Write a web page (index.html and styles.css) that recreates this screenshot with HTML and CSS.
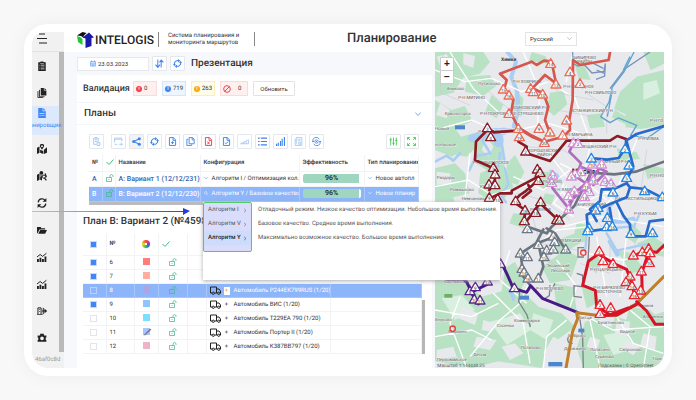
FILE: index.html
```html
<!DOCTYPE html>
<html lang="ru">
<head>
<meta charset="utf-8">
<title>Планирование</title>
<link rel="stylesheet" href="styles.css">
</head>
<body>
<svg class="sprite" aria-hidden="true">
  <symbol id="clipboard" viewBox="0 0 16 16"><path fill="currentColor" fill-rule="evenodd" d="M2 2h3V1h2l1-1 1 1h2v1h3v14H2zM4 6h1v1H4zm2 0h6v1H6zM4 9h1v1H4zm2 0h6v1H6zm-2 3h1v1H4zm2 0h6v1H6zM5 3h6v1H5z"/></symbol>
  <symbol id="copies" viewBox="0 0 16 16"><path fill="currentColor" d="M6 0h5v4h4v8H6z"/><path fill="currentColor" d="M12 0l3 3h-3z"/><path fill="none" stroke="currentColor" stroke-width="1.4" d="M4 3v11h8M1.500 5v10.300h8"/></symbol>
  <symbol id="filled-doc" viewBox="0 0 16 16"><path fill="currentColor" fill-rule="evenodd" d="M2 0h7v5h5v11H2zM4 8v1h8V8zm0 3v1h8v-1z"/><path fill="currentColor" d="M10 0l4 4h-4z"/></symbol>
  <symbol id="map-pin" viewBox="0 0 16 16"><path fill="currentColor" d="M0 6l4-2v10l-4 2zM5 9l5 2v5l-5-2zM11 9l5-4v9l-5 2z"/><path fill="currentColor" fill-rule="evenodd" d="M8 0c5 0 4 4 0 9C4 4 3 0 8 0zm0 2a1 1 0 100 3 1 1 0 000-3z"/></symbol>
  <symbol id="map-people" viewBox="0 0 16 16"><path fill="currentColor" d="M0 6l4-2v10l-4 2zM5 9l3 1v5l-3-1z"/><circle cx="7" cy="3" r="3" fill="currentColor"/><path fill="currentColor" d="M4 7h6l-3 3z"/><circle cx="11" cy="9" r="2.500" fill="none" stroke="currentColor" stroke-width="1.500"/><path fill="none" stroke="currentColor" stroke-width="2" d="M12 11l3 4M13 4l2 6"/></symbol>
  <symbol id="sync" viewBox="0 0 16 16"><path fill="none" stroke="currentColor" stroke-width="2" d="M2 7a6 6 0 0111-3M14 9a6 6 0 01-11 3"/><path fill="currentColor" d="M15 0v6H9zM1 16v-6h6z"/></symbol>
  <symbol id="folder" viewBox="0 0 16 16"><path fill="currentColor" d="M0 3h6l1 2h6v2H4l-3 6H0zM5 8h11l-3 6H2z"/></symbol>
  <symbol id="chart" viewBox="0 0 16 16"><path fill="currentColor" d="M0 11h3v5H0zm4-2h3v7H4zm4 2h3v5H8zm4-4h3v9h-3z"/><path fill="none" stroke="currentColor" stroke-width="1.600" d="M0 8l5-4 4 3 6-5"/></symbol>
  <symbol id="swap" viewBox="0 0 16 16"><path fill="currentColor" d="M0 13h9v1.500H0z"/><path fill="none" stroke="currentColor" stroke-width="1.600" d="M1.500 13V3h5v10M4 5v1M4 8v1M10 3v10M8 8h7"/><path fill="currentColor" d="M12 4l4 4-4 4z"/></symbol>
  <symbol id="camera" viewBox="0 0 16 16"><path fill="currentColor" fill-rule="evenodd" d="M1 4h4V1h6v3h4v3h-1v4h1v3H1v-3h1V7H1zm7 1.500a3 3 0 100 6 3 3 0 000-6z"/></symbol>
  <symbol id="calendar" viewBox="0 0 16 16"><path fill="none" stroke="currentColor" stroke-width="1.500" d="M1.500 3h13v12h-13zM1.500 7h13M4 0v4M12 0v4M4 10h8M4 12.500h8"/></symbol>
  <symbol id="arrows" viewBox="0 0 16 16"><path fill="none" stroke="currentColor" stroke-width="1.800" d="M5 1v13M1 10l4 5 4-5M11 15V2M8 6l3-4 4 4"/></symbol>
  <symbol id="rotate" viewBox="0 0 16 16"><path fill="none" stroke="currentColor" stroke-width="1.800" d="M2.500 10V6.500L6 3h4M13.500 6v3.500L10 13H6"/><path fill="currentColor" d="M0 9h5l-2.500 4zM11 7h5l-2.500-4zM9 0v6l4-3zM7 10v6l-4-3z"/></symbol>
  <symbol id="doc" viewBox="0 0 16 16"><path fill="none" stroke="currentColor" stroke-width="1.700" d="M2.500 1h7l4 4v10h-11zM9 1v5h4M5.500 10h5M8 7.500v5"/></symbol>
  <symbol id="doc-x" viewBox="0 0 16 16"><path fill="none" stroke="currentColor" stroke-width="1.700" d="M2.500 1h7l4 4v10h-11zM9 1v5h4M6 8l4 5M10 8l-4 5"/></symbol>
  <symbol id="doc-check" viewBox="0 0 16 16"><path fill="none" stroke="currentColor" stroke-width="1.700" d="M2.500 1h7l4 4v10h-11zM9 1v5h4M5 10l2 2 4-4"/></symbol>
  <symbol id="duplicate" viewBox="0 0 16 16"><path fill="none" stroke="currentColor" stroke-width="1.600" d="M5.500 1h6l3 3v8h-9zM11 1v4h3M4 4H1.500v11H10v-2"/></symbol>
  <symbol id="share" viewBox="0 0 16 16"><path fill="none" stroke="currentColor" stroke-width="1.800" d="M13 3L3 8l10 5"/><g fill="currentColor"><circle cx="13" cy="3" r="2.700"/><circle cx="3" cy="8" r="2.700"/><circle cx="13" cy="13" r="2.700"/></g></symbol>
  <symbol id="attach" viewBox="0 0 16 16"><path fill="none" stroke="currentColor" stroke-width="1.600" d="M3 2h8v7M3 2v11h5M5 1h4M5 5h4M5 8h4M9 10v5h5v-5z"/></symbol>
  <symbol id="window" viewBox="0 0 16 16"><path fill="none" stroke="currentColor" stroke-width="1.400" d="M1 10V2h13v6M1 4h13M9 13h6M12 10l3 3-3 2M1 13h5"/></symbol>
  <symbol id="ramp" viewBox="0 0 16 16"><path fill="none" stroke="currentColor" stroke-width="1.400" d="M1 12L15 5v7zM7 12V9M11 12V7"/></symbol>
  <symbol id="list" viewBox="0 0 16 16"><path stroke="currentColor" stroke-width="2" d="M0 2h3M5 2h11M0 8h3M5 8h11M0 14h3M5 14h11"/></symbol>
  <symbol id="bars" viewBox="0 0 16 16"><path fill="currentColor" d="M0 12h2v4H0zm3-2h2v6H3zm4-3h2v9H7zm3-4h2v13h-2zm4-3h2v16h-2z"/></symbol>
  <symbol id="report" viewBox="0 0 16 16"><path fill="none" stroke="currentColor" stroke-width="1.400" d="M4 1h10v14H2V4h2zM4 4v9M6 4h6M6 7h6M8 10h4v3H8z"/></symbol>
  <symbol id="gear" viewBox="0 0 16 16"><path fill="none" stroke="currentColor" stroke-width="1.500" d="M2 9a6 6 0 0111-5M14 7a6 6 0 01-11 5M0 8h3M13 8h3"/><circle cx="8" cy="8" r="3" fill="none" stroke="currentColor" stroke-width="1.500"/><circle cx="8" cy="8" r="1" fill="currentColor"/></symbol>
  <symbol id="tune" viewBox="0 0 16 16"><path fill="none" stroke="currentColor" stroke-width="1.600" d="M3 1v14M8 1v14M13 1v14M1 5h4M6 11h4M11 6h4"/></symbol>
  <symbol id="expand" viewBox="0 0 16 16"><path fill="none" stroke="currentColor" stroke-width="1.600" d="M1 5V1h4M1 1l4 4M11 1h4v4M15 1l-4 4M1 11v4h4M1 15l4-4M15 11v4h-4M15 15l-4-4"/></symbol>
  <symbol id="check" viewBox="0 0 16 16"><path fill="none" stroke="currentColor" stroke-width="2" d="M1 8l5 5 9-10"/></symbol>
  <symbol id="unlock" viewBox="0 0 16 16"><path fill="none" stroke="currentColor" stroke-width="1.500" d="M1 7h10v8H1zM8 7V3q3-4 6 0v3M6 10v2"/></symbol>
  <symbol id="down" viewBox="0 0 16 16"><path fill="none" stroke="currentColor" stroke-width="2" d="M1 4l7 8 7-8"/></symbol>
  <symbol id="right" viewBox="0 0 16 16"><path fill="none" stroke="currentColor" stroke-width="1.800" d="M4 1l8 7-8 7"/></symbol>
  <symbol id="search" viewBox="0 0 16 16"><path fill="none" stroke="currentColor" stroke-width="1.800" d="M11 11l4 4"/><circle cx="7" cy="7" r="5" fill="none" stroke="currentColor" stroke-width="1.800"/></symbol>
  <symbol id="ban" viewBox="0 0 16 16"><circle cx="8" cy="8" r="6.700" fill="none" stroke="currentColor" stroke-width="2"/><path stroke="currentColor" stroke-width="2" d="M13 3L3 13"/></symbol>
  <symbol id="truck" viewBox="0 0 22 18"><path fill="none" stroke="currentColor" stroke-width="2" stroke-linejoin="round" d="M4 14H1V2h12v12H9M13 6h5l3 4v4h-1M13 14h2"/><circle cx="6.500" cy="14.500" r="2.300" fill="none" stroke="currentColor" stroke-width="2"/><circle cx="17.500" cy="14.500" r="2.300" fill="none" stroke="currentColor" stroke-width="2"/></symbol>
</svg>

<div class="card">
<div class="app">
  <aside class="sidebar">
    <button class="burger" aria-label="Меню"><svg viewBox="0 0 12 12"><path d="M3 1h6M1 5.500h10M3 10h8" stroke="currentColor" stroke-width="1.200"/></svg></button>
    <nav class="nav">
      <a href="#"><svg><use href="#clipboard"/></svg></a>
      <a href="#"><svg><use href="#copies"/></svg></a>
      <a href="#" class="active"><svg><use href="#filled-doc"/></svg><span>планировщик</span></a>
      <a href="#"><svg><use href="#map-pin"/></svg></a>
      <a href="#"><svg><use href="#map-people"/></svg></a>
      <a href="#"><svg><use href="#sync"/></svg></a>
      <a href="#"><svg><use href="#folder"/></svg></a>
      <a href="#"><svg><use href="#chart"/></svg></a>
      <a href="#"><svg><use href="#chart"/></svg></a>
      <a href="#"><svg><use href="#swap"/></svg></a>
      <a href="#"><svg><use href="#camera"/></svg></a>
    </nav>
    <div class="build">46af0c8d</div>
  </aside>

  <div class="main">
    <header class="header">
      <div class="logo">
        <svg viewBox="0 0 34 32"><path fill="#111" d="M0 7L11 0l8 2-6 6 1 4-6-4z"/><path fill="#20c838" d="M0 8l8 3 3 4v11L2 20z"/><path fill="#1a1aa8" d="M11 11L24 1l10 10-5 1v16l-12 4V13z"/></svg>
        <span>INTELOGIS</span>
      </div>
      <p class="tagline">Система планирования и<br>мониторинга маршрутов</p>
      <h1>Планирование</h1>
      <select class="lang" aria-label="Язык"><option>Русский</option></select>
      <svg class="lang-arrow"><use href="#down"/></svg>
    </header>

    <div class="body">
      <div class="panels">
        <div class="daybar">
          <label class="date"><svg><use href="#calendar"/></svg><input type="text" value="23.03.2023" aria-label="Дата"></label>
          <button class="tool" aria-label="Сортировка"><svg><use href="#arrows"/></svg></button>
          <button class="tool" aria-label="Обновить день"><svg><use href="#rotate"/></svg></button>
          <h2>Презентация</h2>
        </div>

        <section class="validation">
          <h3>Валидация</h3>
          <span class="badge red"><i>×</i>0</span>
          <span class="badge blue"><i>!</i>719</span>
          <span class="badge yellow"><i>!</i>263</span>
          <span class="badge red wide"><svg><use href="#ban"/></svg>0</span>
          <button class="refresh">Обновить</button>
        </section>

        <section class="plans-title"><h3>Планы</h3><svg><use href="#down"/></svg></section>

        <section class="plans">
          <div class="toolbar">
            <button class="tool faded first" aria-label="Вложение"><svg><use href="#attach"/></svg></button>
            <button class="tool faded" aria-label="Окно"><svg><use href="#window"/></svg></button>
            <button class="tool pressed" aria-label="Поделиться"><svg><use href="#share"/></svg></button>
            <button class="tool" aria-label="Пересчитать"><svg><use href="#rotate"/></svg></button>
            <button class="tool" aria-label="Создать"><svg><use href="#doc"/></svg></button>
            <button class="tool" aria-label="Копировать"><svg><use href="#duplicate"/></svg></button>
            <button class="tool danger" aria-label="Удалить"><svg><use href="#doc-x"/></svg></button>
            <button class="tool" aria-label="Утвердить"><svg><use href="#doc-check"/></svg></button>
            <button class="tool faded" aria-label="Уклон"><svg><use href="#ramp"/></svg></button>
            <button class="tool" aria-label="Список"><svg><use href="#list"/></svg></button>
            <button class="tool" aria-label="Статистика"><svg><use href="#bars"/></svg></button>
            <button class="tool faded" aria-label="Отчёт"><svg><use href="#report"/></svg></button>
            <button class="tool" aria-label="Настройки"><svg><use href="#gear"/></svg></button>
            <button class="tool green push" aria-label="Фильтр"><svg><use href="#tune"/></svg></button>
            <button class="tool green" aria-label="Развернуть"><svg><use href="#expand"/></svg></button>
          </div>
          <table class="plan-table">
            <colgroup><col class="c-no"><col class="c-lock"><col class="c-name"><col class="c-conf"><col class="c-eff"><col class="c-type"></colgroup>
            <thead><tr><th>№</th><th><svg class="ok"><use href="#check"/></svg></th><th>Название</th><th>Конфигурация</th><th>Эффективность</th><th>Тип планирования</th></tr></thead>
            <tbody>
              <tr><td class="strong">А</td><td><svg class="ok"><use href="#unlock"/></svg></td><td class="strong">А: Вариант 1 (12/12/231)</td><td><svg class="mini"><use href="#down"/></svg>Алгоритм I / Оптимизация кол...</td><td><div class="meter">96%</div></td><td><svg class="mini"><use href="#down"/></svg>Новое автопл</td></tr>
              <tr class="selected"><td class="strong">В</td><td><svg class="ok"><use href="#unlock"/></svg></td><td class="strong">В: Вариант 2 (12/12/230)</td><td><svg class="mini"><use href="#search"/></svg>Алгоритм Y / Базовое качество...</td><td><div class="meter">96%</div></td><td><svg class="mini"><use href="#down"/></svg>Новое планир</td></tr>
            </tbody>
          </table>
          <div class="hscroll"></div>
        </section>

        <section class="plan">
          <h2>План В: Вариант 2 (№4598</h2>
          <div class="scroller">
          <table class="route-table">
            <colgroup><col class="r-check"><col class="r-no"><col class="r-color"><col class="r-lock"><col class="r-gap"><col class="r-car"><col></colgroup>
            <thead><tr><th><input type="checkbox" checked aria-label="Все"></th><th>№</th><th class="mid"><span class="wheel"></span></th><th><svg class="ok"><use href="#check"/></svg></th><th></th><th></th><th></th></tr></thead>
            <tbody>
              <tr><td><input type="checkbox" checked aria-label="6"></td><td>6</td><td class="mid"><span class="swatch coral"></span></td><td class="mid"><svg class="ok"><use href="#unlock"/></svg></td><td></td><td></td><td></td></tr>
              <tr><td><input type="checkbox" checked aria-label="7"></td><td>7</td><td class="mid"><span class="swatch peach"></span></td><td class="mid"><svg class="ok"><use href="#unlock"/></svg></td><td></td><td></td><td></td></tr>
              <tr class="selected"><td><input type="checkbox" aria-label="8"></td><td>8</td><td class="mid"><span class="swatch lilac"></span></td><td class="mid"><svg class="ok"><use href="#unlock"/></svg></td><td></td><td><svg class="truck"><use href="#truck"/></svg><b class="plus lit">+</b>Автомобиль Р244ЕК799RUS (1/20)</td><td></td></tr>
              <tr><td><input type="checkbox" checked aria-label="9"></td><td>9</td><td class="mid"><span class="swatch sky"></span></td><td class="mid"><svg class="ok"><use href="#unlock"/></svg></td><td></td><td><svg class="truck"><use href="#truck"/></svg><b class="plus">+</b>Автомобиль ВИС (1/20)</td><td></td></tr>
              <tr><td><input type="checkbox" aria-label="10"></td><td>10</td><td class="mid"><span class="swatch cyan"></span></td><td class="mid"><svg class="ok"><use href="#unlock"/></svg></td><td></td><td><svg class="truck"><use href="#truck"/></svg><b class="plus">+</b>Автомобиль Т229ЕА 790 (1/20)</td><td></td></tr>
              <tr><td><input type="checkbox" aria-label="11"></td><td>11</td><td class="mid"><span class="swatch edit"><svg viewBox="0 0 10 10"><path d="M0 9L8 1l2 1-8 7z" fill="#777"/></svg></span></td><td class="mid"><svg class="ok"><use href="#unlock"/></svg></td><td></td><td><svg class="truck"><use href="#truck"/></svg><b class="plus">+</b>Автомобиль Портер II (1/20)</td><td></td></tr>
              <tr><td><input type="checkbox" aria-label="12"></td><td>12</td><td class="mid"><span class="swatch pink"></span></td><td class="mid"><svg class="ok"><use href="#unlock"/></svg></td><td></td><td><svg class="truck"><use href="#truck"/></svg><b class="plus">+</b>Автомобиль К387ВВ797 (1/20)</td><td></td></tr>
            </tbody>
          </table>
          <div class="vscroll"></div>
          </div>
        </section>
      </div>

      <div class="map">
        <svg viewBox="15 96 687 948" preserveAspectRatio="xMidYMid slice">
          <rect x="15" y="96" width="687" height="948" fill="#e7e9ed"/>
          <!-- parks and woods -->
          <g fill="#b9e2c4">
            <path d="M15 96h145l20 30-30 35-50 12-30 45-55 12z"/>
            <path d="M15 240l50 30 40-12 22 45-50 25 30 42-40 40-52-20z"/>
            <path d="M70 96h60l12 24-30 40-42-15zM110 170l70-5 20 32-40 30-55-12z"/>
            <path d="M185 225l35 30-20 40-35-18zM255 210l25 25-6 55-24-8zM360 218l40-5 12 40-40 35-22-20zM305 96l40 12 14 24-62-10zM430 118l30 12 22 50-36-4zM470 285l45-5 10 40-45 5z"/>
            <path d="M570 215l50-45 82-20v140l-90 5-60-28zM585 285l117 0v30l-70 12-45-5zM555 270l50 30-20 12-40-20z"/>
            <path d="M640 96h62v35l-40 20z"/>
            <path d="M15 445l60-15 30 30 14 60-50 12 20 50-74 12zM60 360l70-20 20 30-40 40-50-8zM145 335l65 20 15 90-40 15-55-35zM150 460l70-30 30 70-45 60-60-40z"/>
            <path d="M15 560l100 30 45-30 18 60-60 50-103-22zM230 430l25-25 28 50-20 40-30-10zM320 455l50 0 5 26-30 28-28-20zM345 520l30 5-10 28-32-4zM250 580l40 5-10 40-42-15z"/>
            <path d="M560 385l60 12 10 20-60 5zM640 432l62 13v24l-50 8zM440 610l40 5-15 50-40 8zM395 655l40-15 15 30-60 35-30-10zM605 610l30 30-20 30-30-20z"/>
            <path d="M15 780l80-10 60 60 110-30 60 60 70 20 40 40-80 60-20 64-130-20-80 20-110-20z"/>
            <path d="M225 745l30-20 30 60-20 40-50-10zM335 740l70-50 40 20-25 70-60 10zM370 790l60 12 10 70-60-12zM470 740l30-40 25 10-25 50zM560 690l45 10 40 50-40 10zM620 670l50-20 32 20v40l-55-10z"/>
            <path d="M465 905l80-20 60 20 97-30v169H460l-20-60zM600 860l60 10 42 40-70 30-50-20zM455 800l35 5 20 40-40 20z"/>
          </g>
          <g fill="#d9efdf"><path d="M35 835l60-10 40 45-60 30zM180 905l80-20 50 40-80 50zM310 880l60 20-20 60-50-30zM520 945l60-10 40 50-70 20zM640 190l40-10 10 40-50 20z"/></g>
          <g fill="#e7e9ed"><path d="M95 860l50 20-10 35-50-20zM140 950l60 10-20 30-50-10zM370 950l40 20-20 50-50-20zM515 880l40 10-10 30-42-10zM590 960l40 20-20 26-32-20zM20 110l30-8 20 40-30 20zM100 100l35 8-5 35-30-10zM30 250l30 20-10 25-32-10zM20 455l40 5 5 30-45 5zM160 900l35 10-10 25-30-5zM235 890l35-10 20 30-40 15zM215 980l40-10 25 30-40 20zM20 990l50-10 10 30-60 10zM560 900l40 5-5 45-40-10zM640 940l40 10-5 40-45-10zM480 950l30 10-10 30-30-10zM170 350l20 30-15 30-20-20zM180 460l25 5-5 40-30-10z"/></g>
          <!-- water -->
          <g fill="none" stroke="#a9cdf3" stroke-linecap="round" stroke-linejoin="round">
            <path stroke-width="12" d="M232 96l26 30-14 45 18 45 3 55-14 48"/>
            <path stroke-width="8" d="M244 330l-60-2-28 32 25 40-42 8-22 44M180 350l35 20 8 50M15 425l35-18 20 15 20-22M210 400l-4 36-26 20"/>
            <path stroke-width="22" d="M190 340l30-6M125 355l20-8"/>
            <path stroke-width="7" d="M225 445l10 48-22 32 15 22M362 452l20 12 12 26M475 600l-10 95M562 540l-30 28 18 56 62-5 18-40M530 640l30 52 90-20"/>
            <path stroke-width="14" d="M534 595q24 18 76 2M540 665l22 38"/>
          </g>
          <g fill="#a9cdf3"><ellipse cx="205" cy="360" rx="16" ry="22"/><path d="M232 800l14 5 10 30-8 10z"/></g>
          <!-- streets -->
          <g fill="none" stroke="#fff" stroke-width="4">
            <path d="M15 150l90 35 80-10 90 40 80-30 80 50M60 96l70 110 85 80M15 330l110-30 90 40 140-30 100 30M280 96l50 120-10 130M430 96l-22 90M430 220l60 170M15 500l100-20 70 45 110-30M120 400l-20 180M250 470l90 40 80-60M340 380l70 90M390 430l120 60 60 80M420 480q50-60 100-20t20 80-90 20-50-70M400 620l120-30 180 30M480 380l-30 140M620 360l-60 150 10 90M300 690l80-60 100-10M240 690l-30 90 80 70M300 780l-30 70-60 50-90 110M190 820l90 90 20 120M15 870l110 20 80-40M15 950l110-20 60 30M90 830l-30 80 50 134M450 880l100 50 150-10M480 900l30 144M560 890l50 80 90 30M600 870l60 50-20 124M470 700l110 20 120-30M500 650l30 180M590 640l-20 190M380 720l60 80-20 60M410 900l-60 50-10 94M460 480l70 60M450 550l100-40M430 590l-60-40 40-50"/>
          </g>
          <g fill="none" stroke="#c9ccd3" stroke-width="2"><path d="M40 96l-10 120 90 40M170 210l70 60 90 0M330 160l60 60 100 20M470 220l60 40 0 80M380 270l110 20M290 380l110 10 60 40M260 520l80 20 80 60M500 460l80 0 50 50M300 560l30 110 110 20M650 390l-20 140M490 590l50 60 0 100M615 600l0 90M350 700l40 60M450 730l90 30"/></g>
          <!-- secondary tracks -->
          <g fill="none" stroke-width="4">
            <path stroke="#7793bd" d="M428 96l2 35 15 8 13-10 28 30 36-5 4-24M526 132l-2 36-26 10M500 150l22 10M460 115l60 30M660 96l-75 50-45 60"/>
            <path stroke="#5fa4cf" d="M612 96l-30 60-35 45-10 45-25 44 28 18 25-14 55 22-18 30 50 8 50-35M600 110l-20 40M547 210l-15 80"/>
            <path stroke="#7c838b" d="M270 805l-4 40 25 40 10 36M360 795l-2 32-15 10M375 790l-12 24M440 760l18 6v34l-26-3v32l24 3M448 885l10 70 2 89M420 946q-14 12 0 25l8-1M478 650l-4 70M462 683h-18v28h18"/>
          </g>
          <!-- place names -->
          <g class="places">
            <text x="213" y="124" class="town">Химки</text><text x="430" y="118">БИБИРЕВО</text><text x="442" y="130">РАЙОН</text>
            <text x="248" y="189">Р-Н ХОВРИНО</text><text x="400" y="205">Р-Н ОТРАДНОЕ</text><text x="465" y="221">Р-Н СВИБЛОВО</text>
            <text x="85" y="236">Р-Н МИТИНО</text><text x="145" y="195">Путилково</text><text x="50" y="209">Аниково</text><text x="44" y="285">Красногорск</text>
            <text x="150" y="284">Р-Н ПОКРОВСКОЕ-СТРЕШНЕВО</text><text x="245" y="268">ВОЙКОВСКИЙ Р-Н</text><text x="420" y="276">ОСТАНКИНСКИЙ Р-Н</text>
            <text x="145" y="340">Р-Н СТРОГИНО</text><text x="400" y="349">Р-Н МАРЬИНА</text><text x="660" y="306">Р-Н ГО</text><text x="625" y="360">Р-Н ИЗМА</text>
            <text x="294" y="395">ХОРОШЕВСКИЙ</text><text x="322" y="408">РАЙОН</text><text x="450" y="385">МЕЩАНСКИЙ Р-Н</text>
            <text x="128" y="433">Р-Н КРЫЛАТСКОЕ</text><text x="500" y="430">ТАГАННЫЙ Р-Н</text><text x="425" y="461" class="city">Москва</text>
            <text x="15" y="377">нгельское</text><text x="15" y="330">Новый</text><text x="20" y="477">Раздоры</text><text x="60" y="512">Ромашково</text><text x="660" y="470">Р-Н НО</text>
            <text x="330" y="490">АРБАТОВО</text><text x="150" y="505">КУНЦЕВО</text><text x="95" y="541">Немчиновка</text><text x="370" y="513">Р-Н ХАМОВНИКИ</text>
            <text x="555" y="540">Р-Н ТЕКСТИЛЬЩИКИ</text><text x="430" y="557">ДАНИЛОВСКИЙ</text><text x="300" y="573">РАМЕНКИ</text><text x="612" y="585">Р-Н КУЗЬМ</text>
            <text x="372" y="665">ЧЕРЁМУШКИ</text><text x="350" y="742">Зюзинский</text><text x="362" y="755">Лесопарк</text><text x="480" y="754">Р-Н ЦАРИЦЫНО</text><text x="490" y="807">Р-Н БИРЮЛЁВО</text><text x="500" y="820">ВОСТОЧНОЕ</text>
            <text x="318" y="810">Р-Н ЯСЕНЕВО</text><text x="42" y="790">Картмазово</text><text x="15" y="904">Внуково</text><text x="55" y="938">Марьино</text><text x="200" y="921">Сосенки</text><text x="252" y="905">Коммунарка</text><text x="272" y="986">Потапово</text>
            <text x="130" y="1007">Десна</text><text x="20" y="1022">Первомайское</text><text x="448" y="896">Битца</text><text x="503" y="911">Булатниково</text><text x="415" y="951">Боброво</text><text x="402" y="991">Дрожжино</text>
            <text x="480" y="992">Лопатино</text><text x="495" y="1015">Суханово</text><text x="570" y="938">Видное</text><text x="568" y="992">Сапроново</text><text x="638" y="893">Апаринки</text><text x="600" y="860">им. Ленина</text><text x="668" y="1020">Горки</text>
          </g>
          <g fill="#4b86cf"><rect x="75" y="316" width="30" height="12"/><rect x="267" y="827" width="30" height="12"/><rect x="445" y="926" width="18" height="11"/><rect x="355" y="1026" width="42" height="13"/><rect x="43" y="822" width="24" height="11" fill="#70ad65"/></g>
          <!-- delivery routes -->
          <g fill="none" stroke-width="8" stroke-linejoin="round" stroke-linecap="round">
            <path stroke="#6c757f" d="M702 425l-85 30-64 8-70-5-50 100-68 62-15 20-57-20M350 625l25 15 32 50M340 628l-22 42-46 30 8 70 20 25M325 670l15 70-15 40M372 650l-50 20"/>
            <path stroke="#d5574e" d="M210 161l95-36 15 10 22-13 23 3 13 65-33-25-38 40 33 15 15 40-10 40 13 35M210 161l20 19-8 30 28 30-7 40 22 42 35 22 43 21 57-15 20-20-2-30 10-60 1-120 22 15 85-15 10-58 45 5 28 23 45-50M265 325l40 25 38 15"/>
            <path stroke="#8b1a25" d="M172 322l20 15 70-5M172 330l-34 35-3 55 55 25 5 35-17 30M180 535l30-15h35v-8l75-40 3-25M265 365l25 15v20l70 23 50-61 130 0 22-14 28 10M325 480l-40 35-15 10-20 20 35 25-2 42 47-62 60 55M295 495l8 18-25 20"/>
            <path stroke="#ad6fbd" d="M430 370l-12 25 35 35-15 40 30 20-30 25-22 50-48-60-8-30M485 435l45 20-40 40M418 545l60-50 35-60M450 440l35 12-20 70"/>
            <path stroke="#2869c9" d="M702 318l-82 24-32 20 0 20-22 32-35 5-50-5M590 365l20 75-18 35-2 15-40 18-35 0-5 35-30 25 20 35M590 490l10 12 45 5 50 25M600 502l-10 30-50 20-70 32 4 50 75-10-10-60M560 547l20 40 20 27 2 35 45 0 12-45 43-5"/>
            <path stroke="#481a86" stroke-width="9" d="M210 720l20 40 20 45 40 12 12-20 35 38 105 42M50 778h50l10 8 15 30 45-22M125 820l20 32"/>
            <path stroke="#be8129" stroke-width="9" d="M408 1044l20-110 15-38-3-18 60 8 60 0 60-35 82-82"/>
            <path stroke="#d51427" stroke-width="9" d="M550 730l-45-28-30 22-17 72 38 15 4 48 40 25 55-20M500 887l60-2 60-32M550 730l40 18 18 45 5 35M610 710l30-18 40 5 22-21M655 700l-20 60 2 60M620 845l30 28 26 40h26"/>
          </g>
          <g fill="none" stroke="#ed3d39" stroke-width="4"><circle cx="460" cy="698" r="8"/><circle cx="68" cy="926" r="8"/></g>
          <g id="markers" class="markers"></g>
          <text x="22" y="1042" class="credit">Масштаб 1:144448.25</text><text x="505" y="1042" class="credit">Подсказки | © OpenStreet</text>
        </svg>
        <div class="zoom"><button aria-label="Приблизить">+</button><button aria-label="Отдалить">−</button></div>
      </div>
    </div>
  </div>

  <div class="popup">
    <ul class="algos"><li>Алгоритм I<svg><use href="#right"/></svg></li><li>Алгоритм V<svg><use href="#right"/></svg></li><li class="current">Алгоритм Y<svg><use href="#right"/></svg></li></ul>
    <ul class="notes"><li>Отладочный режим. Низкое качество оптимизации. Небольшое время выполнения.</li><li>Базовое качество. Среднее время выполнения.</li><li>Максимально возможное качество. Большое время выполнения.</li></ul>
  </div>
  <div class="pointer"></div>
</div>
</div>
<script src="markers.js"></script>
</body>
</html>
```
FILE: styles.css
```css
* { box-sizing: border-box; }
body { margin: 0; min-height: 100vh; padding: 24px; display: flex; background: #f8f8f8; color: #333; font: 6px/8px Roboto, "Noto Sans", sans-serif; text-rendering: geometricPrecision; }
h1, h2, h3, p, ul { margin: 0; padding: 0; }
ul { list-style: none; }
button, input, select { font: inherit; color: inherit; margin: 0; padding: 0; }
svg { display: block; flex: none; }
.sprite { position: absolute; width: 0; height: 0; }

.card { flex: 1; min-width: 0; display: flex; padding: 8px; background: #fff; border-radius: 24px; box-shadow: 0 0 16px #ececec; }
.app { position: relative; flex: 1; min-width: 0; display: flex; }

.sidebar { width: 32px; flex: none; display: flex; flex-direction: column; background: #f1f1f1; border-radius: 12px 0 0 16px; overflow: hidden; color: #222; }
.burger { height: 20px; border: 0; border-bottom: 1px solid #e2e2e2; background: none; padding: 0 0 6px 4px; text-align: left; }
.burger svg { width: 12px; height: 12px; }
.nav { flex: 1; display: flex; flex-direction: column; border-right: 5px solid #b9b9b9; }
.nav a { flex: 1; display: flex; flex-direction: column; align-items: center; justify-content: center; color: inherit; text-decoration: none; padding-right: 7px; }
.nav svg { width: 10px; height: 10px; }
.nav .active { background: #dce9fd; color: #4087f5; justify-content: flex-start; padding-top: 2px; gap: 4px; }
.build { height: 16px; padding: 4px 0 0 3px; color: #999; }

.main { flex: 1; min-width: 0; display: flex; flex-direction: column; }
.header { height: 20px; display: flex; align-items: flex-start; padding-left: 13px; }
.logo { display: flex; width: 82px; height: 15px; border-right: 1px solid #888; color: #222; }
.logo svg { width: 17px; height: 16px; }
.logo span { margin-left: 1px; font-size: 12px; line-height: 16px; font-weight: 500; }
.tagline { width: 96px; height: 14px; padding-left: 9px; line-height: 7px; border-right: 1px solid #888; }
.header h1 { margin-left: 92px; font-size: 13px; line-height: 14px; font-weight: 500; white-space: nowrap; }
.lang { width: 52px; height: 14px; margin-left: auto; padding-left: 4px; appearance: none; background: #fff; border: 1px solid #e4e4e4; }
.lang-arrow { width: 5px; height: 5px; margin: 4px 92px 0 -10px; color: #aaa; }

.body { flex: 1; min-height: 0; display: grid; grid-template-columns: minmax(0, 371fr) minmax(0, 229fr); }
.panels { min-width: 0; display: flex; flex-direction: column; background: #f7f8fb; padding: 0 3px 0 13px; }
.panels section { background: #fff; }
.daybar { height: 23px; display: flex; align-items: center; gap: 3px; }
.date { width: 72px; height: 14px; display: flex; align-items: center; gap: 2px; padding-left: 12px; background: #fff; border: 1px solid #e6e8ec; }
.date svg { width: 6px; height: 7px; color: #4087f5; }
.date input { width: 46px; border: 0; outline: 0; background: none; }
.daybar h2 { margin-left: 3px; font-size: 10px; line-height: 14px; font-weight: 500; }
.tool { width: 15px; height: 15px; flex: none; display: grid; place-items: center; background: #fff; border: 1px solid #e4e7ec; border-radius: 1px; color: #3f84ee; }
.tool svg { width: 9px; height: 9px; }
.faded { color: #a0c3f4; }
.pressed { background: #f1f2f4; }
.danger { color: #f0414c; }
.green { color: #42c84f; }

.validation { height: 28px; display: flex; align-items: center; gap: 5px; padding-left: 6px; border-bottom: 1px solid #f5f6f9; }
.validation h3 { width: 45px; font-size: 9px; line-height: 14px; font-weight: 500; }
.badge { width: 24px; height: 15px; display: flex; align-items: center; gap: 2px; padding-left: 2px; border: 1px solid; }
.badge i { width: 6px; height: 6px; border-radius: 50%; color: #fff; font: bold 5px/6px Roboto, sans-serif; text-align: center; }
.badge svg { width: 8px; height: 8px; color: #e24a50; }
.red { background: #fff0f0; border-color: #fadada; }
.red i { background: #f43e46; }
.blue { background: #edf6ff; border-color: #d4e6fb; }
.blue i { background: #3d84ee; }
.yellow { background: #fffce8; border-color: #f8efbd; }
.yellow i { background: #f9a908; }
.wide { width: 28px; gap: 7px; }
.refresh { width: 42px; height: 15px; background: #fff; border: 1px solid #e1e3e6; border-radius: 1px; }
.plans-title { height: 22px; display: flex; align-items: center; justify-content: space-between; padding: 0 11px 0 7px; border-bottom: 1px solid #f5f6f9; }
.plans-title h3 { font-size: 10px; line-height: 14px; font-weight: 500; }
.plans-title svg { width: 6px; height: 6px; color: #4f91ef; }

.plans { padding: 9px 13px 0 12px; }
.toolbar { display: flex; gap: 3px; height: 21px; }
.first { margin-right: 4px; }
.push { margin-left: auto; }
table { width: 100%; table-layout: fixed; border-collapse: collapse; }
th, td { padding: 0 0 0 3px; text-align: left; white-space: nowrap; overflow: hidden; font-weight: 400; border-right: 1px solid #f2f3f5; border-bottom: 1px solid #f2f3f5; }
th { font-weight: 500; }
td svg, th svg { display: inline-block; vertical-align: middle; }
.ok { width: 8px; height: 8px; color: #42ba86; }
.mini { width: 4px; height: 4px; margin-right: 4px; color: #629aee; }
.plan-table th { height: 16px; }
.plan-table td { height: 15px; }
.plan-table .strong { font-size: 7px; font-weight: 500; color: #3560ad; }
.c-no { width: 13px; }
.c-lock { width: 13px; }
.c-name { width: 85px; }
.c-conf { width: 99px; }
.c-eff { width: 65px; }
.meter { width: 58px; height: 9px; border-radius: 2px; background: linear-gradient(90deg, #9fd6bf 96%, #fff 96%); color: #222; font-size: 7px; font-weight: 500; text-align: center; line-height: 9px; }
.selected td { background: #8db5fa; color: #fff; border-color: #a8c7fb; }
.plan-table .selected .strong, .selected .mini { color: #fff; }
.hscroll { height: 3px; background: #bbb; }

.plan { flex: 1; padding: 9px 7px 0 6px; }
.plan h2 { height: 20px; font-size: 10px; line-height: 15px; font-weight: 500; white-space: nowrap; }
.scroller { display: flex; align-items: flex-end; }
.route-table { flex: 1; width: auto; min-width: 0; }
.route-table th { height: 22px; }
.route-table td { height: 14px; }
.route-table tr > :first-child { padding-left: 7px; }
.route-table .mid { text-align: center; padding: 0; }
.vscroll { width: 3px; height: 54px; background: #b6b6b6; }
.r-check { width: 23px; }
.r-no { width: 28px; }
.r-color { width: 24px; }
.r-lock { width: 29px; }
.r-gap { width: 19px; }
.r-car { width: 119px; }
input[type="checkbox"] { appearance: none; display: block; width: 7px; height: 7px; background: #fff; border: 1px solid #e2e6ec; }
input[type="checkbox"]:checked { background: #4087f5; border-color: #c5dafb; }
.selected input[type="checkbox"] { background: none; border-color: #b9d2fb; }
.swatch { display: inline-block; width: 7px; height: 7px; vertical-align: middle; }
.swatch svg { width: 9px; height: 8px; }
.coral { background: #ff7d7d; }
.peach { background: #ffae9f; }
.lilac { background: #aca5e4; }
.sky { background: #8dc6ff; }
.cyan { background: #7ddfff; }
.edit { background: #a9c4ff; }
.pink { background: #edb3c8; }
.wheel { display: inline-block; width: 8px; height: 8px; border-radius: 50%; vertical-align: middle; background: radial-gradient(#fff 0 1px, transparent 1px), conic-gradient(#ef4d31, #e8379e, #6744d4, #2b79e5, #27b66e, #8fcf2f, #f4d92d, #f08b26, #ef4d31); }
.truck { width: 11px; height: 9px; color: #222; }
.plus { display: inline-block; width: 6px; margin: 0 4px 0 3px; text-align: center; font-weight: 400; }
.lit { background: #fff; color: #eaa323; }

.map { position: relative; min-width: 0; overflow: hidden; border-radius: 0 0 16px 0; }
.map > svg { position: absolute; width: 100%; height: 100%; }
.places text { font: 13px Roboto, sans-serif; fill: #555; stroke: #f4f5f6; stroke-width: 2px; paint-order: stroke; }
.places .town { font-size: 15px; font-weight: 700; fill: #333; }
.places .city { font-size: 23px; font-weight: 700; fill: #222; }
.markers path { fill: #fff; stroke: currentColor; stroke-width: 4px; stroke-linejoin: round; }
.markers text { font: 14px Roboto, sans-serif; fill: #333; text-anchor: middle; }
.map .credit { font: 14px Roboto, sans-serif; fill: #555; }
.zoom { position: absolute; left: 5px; top: 5px; display: grid; gap: 1px; border: 1px solid #ccc; background: #ccc; border-radius: 1px; }
.zoom button { width: 12px; height: 12px; border: 0; background: #fff; font: bold 10px/12px "Liberation Sans", sans-serif; color: #222; }

.popup { position: absolute; left: 171px; top: 170px; width: 297px; height: 78px; display: flex; background: #fff; box-shadow: 0 1px 4px #aaa; color: #555; }
.algos { flex: none; width: 49px; height: 50px; background: #d9dcfb; border: 1px solid #54cb69; border-radius: 2px; white-space: nowrap; }
.algos li { height: 14px; display: flex; align-items: center; justify-content: space-between; padding: 0 4px; }
.algos svg { width: 4px; height: 5px; }
.algos .current { background: #cddcfa; color: #222; font-weight: 500; }
.notes { padding: 1px 0 0 6px; white-space: nowrap; }
.notes li { height: 14px; line-height: 14px; }
.pointer { position: absolute; left: 0; top: 179px; width: 152px; height: 1px; background: linear-gradient(90deg, #b2bff0, #3345d8); }
.pointer::after { content: ""; position: absolute; left: 151px; top: -3px; border: solid transparent; border-width: 3px 0 4px 7px; border-left-color: #263bdc; }
```
FILE: markers.js
```js
// Each stop: [x, y, number] in map units.
const routes = {
  "#ef6a56": [[362,130,14],[378,192,13],[420,155,4],[450,190,2],[220,207,15],[237,225,16],[302,205,9],[310,215,11],[338,222,10],[237,280,17],[327,325,9],[410,300,6],[265,325,18],[268,350,19],[360,336,8],[398,345,7],[343,367,20]],
  "#8b1a25": [[172,323,3],[182,350,4],[287,393,2],[190,442,5],[195,462,7],[177,492,8],[195,494,6],[178,532,9],[203,536,10],[322,447,12],[330,457,13],[325,481,14],[257,542,15],[332,545,13],[285,570,16],[317,577,18],[283,602,17],[380,598,20],[388,600,22]],
  "#d98fda": [[430,368,3],[444,370,2],[487,432,10],[515,432,11],[452,455,9],[435,461,4],[424,468,5],[368,465,21],[365,487,20],[490,480,14],[525,484,12],[543,490,13],[470,497,16],[433,512,8],[477,514,17],[415,527,7],[464,530,18],[416,567,19]],
  "#2586e3": [[484,414,3],[585,386,2],[597,435,4],[590,472,5],[549,516,6],[644,512,16],[697,530,15],[504,562,7],[497,570,8],[532,592,17],[477,623,12],[473,632,11],[530,620,13],[547,618,14],[603,640,9],[668,638,10]],
  "#6d7886": [[292,626,2],[325,673,4],[370,648,5],[374,665,6],[350,690,7],[370,687,8],[407,687,10],[271,699,12],[292,710,11],[342,710,15],[276,745,13],[282,756,14],[294,774,16],[325,774,17]],
  "#5a268b": [[211,730,1],[172,783,13],[253,803,2],[120,812,8],[136,800,9],[133,837,10],[150,840,11]],
  "#ee2531": [[508,693,2],[519,722,3],[549,730,4],[610,705,9],[637,695,8],[656,685,7],[660,698,6],[658,727,10],[634,753,11],[600,768,12],[588,785,13],[606,797,14],[632,810,15],[613,824,16],[510,853,2],[510,880,3],[542,862,4]]
};
const ns = "http://www.w3.org/2000/svg";
const layer = document.getElementById("markers");
for (const [color, stops] of Object.entries(routes)) {
  for (const [x, y, number] of stops) {
    const g = document.createElementNS(ns, "g");
    g.setAttribute("transform", `translate(${x} ${y})`);
    g.setAttribute("color", color);
    const shape = document.createElementNS(ns, "path");
    shape.setAttribute("d", "M0 -14L15 12H-15Z");
    const label = document.createElementNS(ns, "text");
    label.setAttribute("y", "9");
    label.textContent = number;
    g.append(shape, label);
    layer.append(g);
  }
}
```
